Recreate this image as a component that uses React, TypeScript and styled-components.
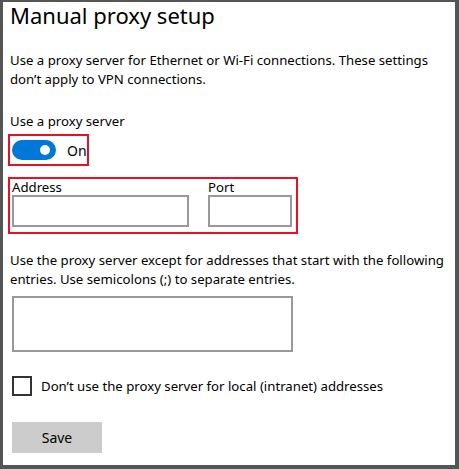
import React, { useState } from 'react';
import styled, { createGlobalStyle } from 'styled-components';

const GlobalStyle = createGlobalStyle`
  html, body {
    margin: 0;
    padding: 0;
    background: #fff;
  }
  body {
    font-family: "Noto Sans", "Open Sans", sans-serif;
    color: #000;
  }
`;

const Frame = styled.div`
  width: 459px;
  height: 469px;
  box-sizing: border-box;
  border-style: solid;
  border-color: #555;
  border-width: 2px 4px 4px 3px;
  background: #fff;
  padding: 0 0 0 7px;
  display: flex;
  flex-direction: column;
`;

const Title = styled.h1`
  margin: 0;
  font-weight: 400;
  font-size: 22px;
  line-height: 26px;
  height: 27px;
`;

const Text = styled.p<{ $top: number }>`
  margin: ${p => p.$top}px 0 0;
  font-size: 13.2px;
  line-height: 19px;
  padding-right: 6px;
`;

const Highlight = styled.div`
  border: 2px solid #e81123;
  box-sizing: border-box;
  margin-left: -2px;
`;

const ToggleBox = styled(Highlight)`
  width: 81px;
  height: 32px;
  margin-top: 3px;
  display: flex;
  align-items: center;
  padding-left: 2px;
  gap: 11px;
`;

const Track = styled.button<{ $on: boolean }>`
  width: 44px;
  height: 20px;
  border-radius: 10px;
  border: 2px solid ${p => (p.$on ? '#0078d7' : '#333')};
  background: ${p => (p.$on ? '#0078d7' : '#fff')};
  padding: 0 4px;
  box-sizing: border-box;
  display: flex;
  align-items: center;
  justify-content: ${p => (p.$on ? 'flex-end' : 'flex-start')};
  cursor: pointer;
`;

const Knob = styled.span<{ $on: boolean }>`
  width: 10px;
  height: 10px;
  border-radius: 50%;
  background: ${p => (p.$on ? '#fff' : '#333')};
`;

const ToggleLabel = styled.span`
  font-size: 14px;
`;

const FieldsBox = styled(Highlight)`
  width: 290px;
  height: 57px;
  margin-top: 11px;
  display: flex;
  gap: 19px;
  padding: 0 0 0 2px;
`;

const Field = styled.label`
  display: flex;
  flex-direction: column;
  font-size: 13.2px;
  line-height: 16px;
`;

const Input = styled.input<{ $w: number }>`
  width: ${p => p.$w}px;
  height: 32px;
  box-sizing: border-box;
  border: 2px solid #999;
  margin: 0;
  font: inherit;
  outline: none;
`;

const Area = styled.textarea`
  width: 281px;
  height: 56px;
  box-sizing: border-box;
  border: 2px solid #999;
  margin: 7px 0 0 2px;
  resize: none;
  font: inherit;
  outline: none;
`;

const CheckRow = styled.label`
  display: flex;
  align-items: center;
  gap: 9px;
  margin: 24px 0 0 2px;
  font-size: 13.2px;
`;

const Box = styled.span`
  width: 20px;
  height: 20px;
  box-sizing: border-box;
  border: 2px solid #333;
  background: #fff;
`;

const SaveButton = styled.button`
  width: 90px;
  height: 31px;
  margin: 26px 0 0 2px;
  border: none;
  background: #ccc;
  font-family: inherit;
  font-size: 14px;
  color: #000;
`;

export default function App() {
  const [on, setOn] = useState(true);
  return (
    <>
      <GlobalStyle />
      <Frame>
        <Title>Manual proxy setup</Title>
        <Text $top={22}>
          Use a proxy server for Ethernet or Wi-Fi connections. These settings
          don’t apply to VPN connections.
        </Text>
        <Text $top={23}>Use a proxy server</Text>
        <ToggleBox>
          <Track $on={on} onClick={() => setOn(!on)}>
            <Knob $on={on} />
          </Track>
          <ToggleLabel>{on ? 'On' : 'Off'}</ToggleLabel>
        </ToggleBox>
        <FieldsBox>
          <Field>
            Address
            <Input $w={177} />
          </Field>
          <Field>
            Port
            <Input $w={84} />
          </Field>
        </FieldsBox>
        <Text $top={17}>
          Use the proxy server except for addresses that start with the following
          entries. Use semicolons (;) to separate entries.
        </Text>
        <Area />
        <CheckRow>
          <Box />
          Don’t use the proxy server for local (intranet) addresses
        </CheckRow>
        <SaveButton>Save</SaveButton>
      </Frame>
    </>
  );
}
